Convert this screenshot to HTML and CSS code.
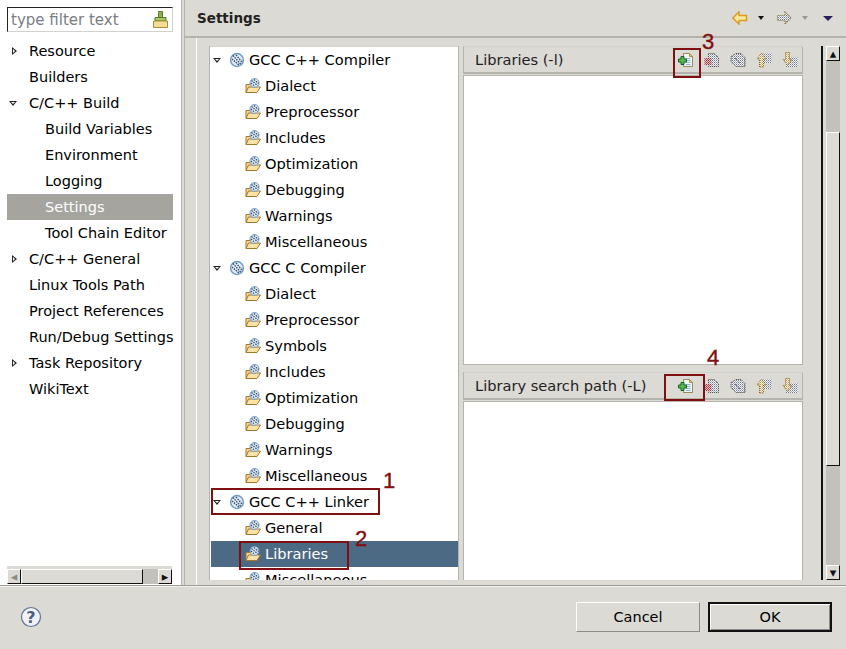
FILE: index.html
```html
<!DOCTYPE html>
<html>
<head lang="en">
    <meta charset="UTF-8">
    <title>Settings</title>
    <link rel="stylesheet" href="styles.css">
</head>

<body>
<svg class="defs" width="0" height="0">
    <defs>
        <pattern id="dither" width="2" height="2" patternUnits="userSpaceOnUse">
            <rect width="1" height="1" fill="#6f7686"/>
            <rect x="1" y="1" width="1" height="1" fill="#aab2c4"/>
            <rect x="1" width="1" height="1" fill="#f4f4f4"/>
            <rect y="1" width="1" height="1" fill="#f4f4f4"/>
        </pattern>
        <pattern id="ditherred" width="2" height="2" patternUnits="userSpaceOnUse">
            <rect width="1" height="1" fill="#a02a40"/>
            <rect x="1" y="1" width="1" height="1" fill="#b84a60"/>
            <rect x="1" width="1" height="1" fill="#dcc4c4"/>
            <rect y="1" width="1" height="1" fill="#dcc4c4"/>
        </pattern>
        <pattern id="ditherbrown" width="2" height="2" patternUnits="userSpaceOnUse">
            <rect width="1" height="1" fill="#b89850"/>
            <rect x="1" y="1" width="1" height="1" fill="#d8c488"/>
            <rect x="1" width="1" height="1" fill="#f6f0dc"/>
            <rect y="1" width="1" height="1" fill="#f6f0dc"/>
        </pattern>
        <symbol id="gear" viewBox="0 0 16 16">
            <circle cx="8" cy="8" r="6.400" fill="#e4edf5" stroke="#6f9cc4" stroke-width="1.500"/>
            <path d="M4 3.500l8 9M3 7l7 6M7 3l6 7" stroke="#2f4f72" stroke-width="1.400" stroke-dasharray="1.500 1" fill="none"/>
        </symbol>
        <symbol id="tool" viewBox="0 0 16 16">
            <path d="M1 6.500h4l1 1h5v7h-10z" fill="#f6d693" stroke="#a9752b"/>
            <path d="M1 14.500l2.500-5.500h12l-3.500 5.500z" fill="#fbe3a8" stroke="#a9752b"/>
            <circle cx="9.500" cy="5" r="4.500" fill="#e6eef5" stroke="#6f9cc4"/>
            <path d="M6.500 2.500l6 5M6 5l4 3.500M9 1.500l4.500 4" stroke="#2f4f72" stroke-width="1.300" stroke-dasharray="1.500 1" fill="none"/>
        </symbol>
        <symbol id="add" viewBox="0 0 16 16">
            <path d="M5.500 1.500h6l3 3v10h-9z" fill="#f2f5fa" stroke="#9a8a58"/>
            <path d="M11.500 1.500v3h3z" fill="#e8c878" stroke="#b09040"/>
            <path d="M8 6.500h4.500M8 8.500h4.500M8 10.500h4.500M8 12.500h4.500" stroke="#8fb0d8"/>
            <path d="M3 4.500h3v2.500h2.500v3h-2.500v2.500h-3v-2.500h-2.500v-3h2.500z" fill="#58b848" stroke="#14602c"/>
        </symbol>
        <symbol id="del" viewBox="0 0 16 16">
            <path d="M4.500 1.500h6l4 4v9h-10z" fill="url(#dither)" stroke="#4a4436" stroke-dasharray="1 1"/>
            <rect x="0.500" y="6" width="7" height="7" fill="url(#ditherred)"/>
        </symbol>
        <symbol id="edit" viewBox="0 0 16 16">
            <path d="M1 4.500l5-3h5l4 4v9h-9l-5-5z" fill="url(#dither)" stroke="#4a4436" stroke-dasharray="1 1"/>
            <path d="M5 6l5 5" stroke="#444" stroke-dasharray="1 1"/>
        </symbol>
        <symbol id="up" viewBox="0 0 16 16">
            <rect x="6" y="1" width="10" height="10" fill="url(#dither)"/>
            <path d="M5.500 1l4.500 6h-2.500v8h-4v-8h-2.500z" fill="url(#ditherbrown)" stroke="#8a6420" stroke-dasharray="1 1"/>
        </symbol>
        <symbol id="down" viewBox="0 0 16 16">
            <rect x="4" y="5" width="12" height="10" fill="url(#dither)"/>
            <path d="M3.500 0.500h4v7h2.500l-4.500 6-4.500-6h2.500z" fill="url(#ditherbrown)" stroke="#8a6420" stroke-dasharray="1 1"/>
        </symbol>
    </defs>
</svg>

<div class="main">
    <div class="sidebar">
        <div class="filter">
            <span>type filter text</span>
            <svg class="brush" viewBox="0 0 15 17" width="15" height="17">
                <path d="M5.500 0.500h4v6h-4z" fill="#8fb050" stroke="#5c7a28"/>
                <path d="M2 6.500h11v3.500h-11z" fill="#a8c860" stroke="#5c7a28"/>
                <path d="M0.500 10h14v6.500h-14z" fill="#f3dc98" stroke="#a98c3c"/>
            </svg>
        </div>
        <ul class="nav">
            <li><i class="arrow closed"></i>Resource</li>
            <li>Builders</li>
            <li><i class="arrow open"></i>C/C++ Build</li>
            <li class="sub">Build Variables</li>
            <li class="sub">Environment</li>
            <li class="sub">Logging</li>
            <li class="sub current">Settings</li>
            <li class="sub">Tool Chain Editor</li>
            <li><i class="arrow closed"></i>C/C++ General</li>
            <li>Linux Tools Path</li>
            <li>Project References</li>
            <li>Run/Debug Settings</li>
            <li><i class="arrow closed"></i>Task Repository</li>
            <li>WikiText</li>
        </ul>
        <div class="hbar">
            <span class="sbtn dim">&#9666;</span>
            <span class="hthumb"></span>
            <span class="htrack"></span>
            <span class="sbtn">&#9656;</span>
        </div>
    </div>

    <div class="content">
        <div class="head">
            <b>Settings</b>
            <div class="navicons">
                <svg width="16" height="14" viewBox="0 0 16 14"><path d="M7 1v3.500h7.500v5h-7.500v3.500l-6.200-6z" fill="#fde8a0" stroke="#d99a20" stroke-width="1.500"/></svg>
                <i class="mini"></i>
                <svg class="fwd" width="16" height="14" viewBox="0 0 16 14"><path d="M9 1v3.500h-7.500v5h7.500v3.500l6.200-6z" fill="url(#dither)" stroke="#8a7440" stroke-width="1.200" stroke-dasharray="1 1"/></svg>
                <i class="mini dim"></i>
                <i class="menu"></i>
            </div>
        </div>

        <div class="body">
            <div class="tree">
                <ul>
                    <li class="tool"><i class="arrow open"></i><svg class="ic"><use href="#gear"/></svg>GCC C++ Compiler</li>
                    <li class="opt"><svg class="ic"><use href="#tool"/></svg>Dialect</li>
                    <li class="opt"><svg class="ic"><use href="#tool"/></svg>Preprocessor</li>
                    <li class="opt"><svg class="ic"><use href="#tool"/></svg>Includes</li>
                    <li class="opt"><svg class="ic"><use href="#tool"/></svg>Optimization</li>
                    <li class="opt"><svg class="ic"><use href="#tool"/></svg>Debugging</li>
                    <li class="opt"><svg class="ic"><use href="#tool"/></svg>Warnings</li>
                    <li class="opt"><svg class="ic"><use href="#tool"/></svg>Miscellaneous</li>
                    <li class="tool"><i class="arrow open"></i><svg class="ic"><use href="#gear"/></svg>GCC C Compiler</li>
                    <li class="opt"><svg class="ic"><use href="#tool"/></svg>Dialect</li>
                    <li class="opt"><svg class="ic"><use href="#tool"/></svg>Preprocessor</li>
                    <li class="opt"><svg class="ic"><use href="#tool"/></svg>Symbols</li>
                    <li class="opt"><svg class="ic"><use href="#tool"/></svg>Includes</li>
                    <li class="opt"><svg class="ic"><use href="#tool"/></svg>Optimization</li>
                    <li class="opt"><svg class="ic"><use href="#tool"/></svg>Debugging</li>
                    <li class="opt"><svg class="ic"><use href="#tool"/></svg>Warnings</li>
                    <li class="opt"><svg class="ic"><use href="#tool"/></svg>Miscellaneous</li>
                    <li class="tool"><i class="arrow open"></i><svg class="ic"><use href="#gear"/></svg>GCC C++ Linker</li>
                    <li class="opt"><svg class="ic"><use href="#tool"/></svg>General</li>
                    <li class="opt current"><svg class="ic"><use href="#tool"/></svg>Libraries</li>
                    <li class="opt"><svg class="ic"><use href="#tool"/></svg>Miscellaneous</li>
                </ul>
            </div>

            <div class="lists">
                <div class="pane first">
                    <div class="pane-head">
                        <span>Libraries (-l)</span>
                        <div class="tools">
                            <svg><use href="#add"/></svg>
                            <svg><use href="#del"/></svg>
                            <svg><use href="#edit"/></svg>
                            <svg><use href="#up"/></svg>
                            <svg><use href="#down"/></svg>
                        </div>
                    </div>
                    <div class="pane-list"></div>
                </div>
                <div class="pane second">
                    <div class="pane-head">
                        <span>Library search path (-L)</span>
                        <div class="tools">
                            <svg><use href="#add"/></svg>
                            <svg><use href="#del"/></svg>
                            <svg><use href="#edit"/></svg>
                            <svg><use href="#up"/></svg>
                            <svg><use href="#down"/></svg>
                        </div>
                    </div>
                    <div class="pane-list"></div>
                </div>
            </div>

            <div class="vbar">
                <span class="sbtn">&#9652;</span>
                <span class="vtrack"><span class="vthumb"></span></span>
                <span class="sbtn">&#9662;</span>
            </div>
        </div>
    </div>
</div>

<div class="footer">
    <svg class="help" width="22" height="22" viewBox="0 0 22 22">
        <circle cx="11" cy="11" r="9.500" fill="#f1f2f6" stroke="#5f7396" stroke-width="1.200"/>
        <text x="11" y="16.500" text-anchor="middle">?</text>
    </svg>
    <div class="buttons">
        <button class="btn">Cancel</button>
        <button class="btn default">OK</button>
    </div>
</div>

<!-- annotations -->
<div class="mark m1"></div><span class="num n1">1</span>
<div class="mark m2"></div><span class="num n2">2</span>
<div class="mark m3"></div><span class="num n3">3</span>
<div class="mark m4"></div><span class="num n4">4</span>
</body>
</html>
```
FILE: styles.css
```css
*{
    margin: 0;
    padding: 0;
    box-sizing: border-box;
}
li{
    list-style: none;
}
html,body{
    width: 846px;
    height: 649px;
    overflow: hidden;
}
body{
    position: relative;
    background: #dcdad5;
    font-family: "DejaVu Sans", sans-serif;
    font-size: 14.5px;
    color: #000;
}
.defs{
    position: absolute;
}
.main{
    display: flex;
    height: 586px;
    border-bottom: 1px solid #9d9c97;
}

/* left side */
.sidebar{
    width: 183px;
    background: #fff;
    padding: 7px 0 0 7px;
    border-right: 1px solid #b5b3ad;
    display: flex;
    flex-direction: column;
}
.filter{
    width: 166px;
    height: 25px;
    border: 1px solid #d3d1cb;
    border-top: 1px solid #222;
    border-left: 1px solid #222;
    display: flex;
    align-items: center;
    justify-content: space-between;
    padding: 0 4px 0 3px;
    color: #7b7d85;
    font-size: 15px;
}
.nav{
    padding-top: 6px;
    flex: 1;
}
.nav li{
    height: 26px;
    line-height: 27px;
    padding-left: 22px;
    position: relative;
    white-space: nowrap;
}
.nav li.sub{
    padding-left: 38px;
}
.nav li.current{
    width: 166px;
    background: #a6a49f;
    color: #fff;
}
.arrow{
    position: absolute;
    width: 0;
    height: 0;
}
.arrow.closed{
    left: 5px;
    top: 9px;
    border-style: solid;
    border-width: 4px 0 4px 5px;
    border-color: transparent transparent transparent #222;
}
.arrow.closed::after{
    content: "";
    position: absolute;
    left: -4px;
    top: -2px;
    border-style: solid;
    border-width: 2px 0 2px 2px;
    border-color: transparent transparent transparent #fff;
}
.arrow.open{
    left: 2px;
    top: 11px;
    border-style: solid;
    border-width: 5px 4px 0 4px;
    border-color: #222 transparent transparent transparent;
}
.arrow.open::after{
    content: "";
    position: absolute;
    left: -2px;
    top: -4px;
    border-style: solid;
    border-width: 2px 2px 0 2px;
    border-color: #fff transparent transparent transparent;
}
.hbar{
    width: 165px;
    height: 18px;
    margin-bottom: 1px;
    border-top: 3px solid #dcdad5;
    display: flex;
    background: #c3c1bb;
}
.sbtn{
    width: 14px;
    height: 15px;
    flex: none;
    background: #dcdad5;
    border: 1px solid #fff;
    border-right-color: #111;
    border-bottom-color: #111;
    font-size: 13px;
    line-height: 13px;
    text-align: center;
    color: #111;
    overflow: hidden;
}
.sbtn.dim{
    color: #8d8c87;
}
.hthumb{
    width: 122px;
    background: #dcdad5;
    border: 1px solid #fff;
    border-right-color: #111;
    border-bottom-color: #111;
    margin-left: 0;
}
.htrack{
    flex: 1;
}

/* right side */
.content{
    flex: 1;
    margin-left: 2px;
    border-left: 1px solid #b5b3ad;
    display: flex;
    flex-direction: column;
}
.head{
    height: 38px;
    padding: 0 13px 0 12px;
    border-bottom: 2px solid #b5b3ad;
    display: flex;
    align-items: center;
    justify-content: space-between;
    font-size: 13.5px;
    color: #222;
}
.navicons{
    display: flex;
    align-items: center;
}
.mini{
    width: 0;
    height: 0;
    margin-left: 10px;
    border-style: solid;
    border-width: 4px 3px 0 3px;
    border-color: #111 transparent transparent transparent;
}
.mini.dim{
    border-top-color: #999;
}
.fwd{
    margin-left: 12px;
}
.menu{
    width: 0;
    height: 0;
    margin-left: 15px;
    border-style: solid;
    border-width: 5px 5px 0 5px;
    border-color: #2a1f5a transparent transparent transparent;
}
.body{
    flex: 1;
    display: flex;
    min-height: 0;
    padding: 8px 6px 5px 24px;
    position: relative;
}
.body::before{
    content: "";
    position: absolute;
    left: 11px;
    top: 0;
    bottom: 0;
    width: 1px;
    background: #fff;
}
.tree{
    width: 250px;
    background: #fff;
    border: 1px solid #b5b3ad;
    border-width: 0 1px 0 1px;
    overflow: hidden;
    flex: none;
    box-shadow: inset 0 1px 0 #d3d1cb;
}
.tree li{
    height: 26px;
    line-height: 26px;
    margin-left: 1px;
    position: relative;
    white-space: nowrap;
    font-size: 14.6px;
}
.tree ul{
    padding-top: 1px;
}
.tree .tool{
    padding-left: 38px;
}
.tree .opt{
    padding-left: 54px;
}
.tree .current{
    background: #4d6a85;
    color: #fff;
}
.ic{
    position: absolute;
    width: 16px;
    height: 16px;
    top: 5px;
}
.tool .ic{
    left: 18px;
}
.opt .ic{
    left: 34px;
}
.lists{
    width: 340px;
    margin-left: 4px;
    display: flex;
    flex-direction: column;
    flex: none;
}
.pane{
    display: flex;
    flex-direction: column;
}
.pane.first{
    height: 319px;
}
.pane.second{
    flex: 1;
    margin-top: 7px;
    min-height: 0;
}
.pane-head{
    height: 28px;
    border: 1px solid #b5b3ad;
    border-top-color: #d3d1cb;
    border-bottom: 2px solid #b5b3ad;
    padding: 0 4px 0 11px;
    display: flex;
    align-items: center;
    justify-content: space-between;
    font-size: 14.6px;
    color: #222;
    flex: none;
}
.tools{
    display: flex;
    gap: 10px;
}
.tools svg{
    width: 16px;
    height: 16px;
}
.pane-list{
    flex: 1;
    margin-top: 1px;
    background: #fff;
    border: 1px solid #b5b3ad;
    border-bottom: none;
}
.first .pane-list{
    border-bottom: 1px solid #b5b3ad;
}
.vbar{
    width: 19px;
    margin-left: 18px;
    border-left: 2px solid #111;
    padding-left: 3px;
    display: flex;
    flex-direction: column;
    flex: none;
}
.vbar .sbtn{
    width: 14px;
    height: 15px;
}
.vtrack{
    flex: 1;
    background: #c3c1bb;
    padding-top: 71px;
}
.vthumb{
    display: block;
    height: 334px;
    background: #dcdad5;
    border: 1px solid #fff;
    border-right-color: #111;
    border-bottom-color: #111;
}

/* bottom */
.footer{
    height: 62px;
    border-top: 1px solid #f4f3f0;
    display: flex;
    align-items: center;
    justify-content: space-between;
    padding: 0 14px 0 20px;
}
.help text{
    font-family: "DejaVu Sans", sans-serif;
    font-size: 16px;
    font-weight: bold;
    fill: #4a5f88;
}
.help{
    margin-bottom: 2px;
}
.buttons{
    display: flex;
    gap: 8px;
    margin-bottom: 2px;
}
.btn{
    width: 124px;
    height: 30px;
    background: #dcdad5;
    font: inherit;
    color: #000;
    border: 1px solid #fff;
    border-right-color: #8d8c87;
    border-bottom-color: #8d8c87;
}
.btn.default{
    border: 2px solid #111;
    box-shadow: inset 1px 1px 0 #fff, inset -1px -1px 0 #8d8c87;
}

/* red marks laid over the screenshot */
.mark{
    position: absolute;
    border: 2px solid #7f0f10;
}
.m1{
    left: 211px;
    top: 488px;
    width: 169px;
    height: 27px;
}
.m2{
    left: 239px;
    top: 541px;
    width: 110px;
    height: 29px;
}
.m3{
    left: 673px;
    top: 48px;
    width: 28px;
    height: 30px;
}
.m4{
    left: 664px;
    top: 374px;
    width: 41px;
    height: 27px;
}
.num{
    position: absolute;
    font-family: "Liberation Sans", sans-serif;
    font-size: 22px;
    line-height: 22px;
    color: #7f0f10;
    -webkit-text-stroke: 0.4px #7f0f10;
}
.n1{ left: 383px; top: 470px; }
.n2{ left: 355px; top: 528px; }
.n3{ left: 702px; top: 31px; }
.n4{ left: 707px; top: 347px; }
```
